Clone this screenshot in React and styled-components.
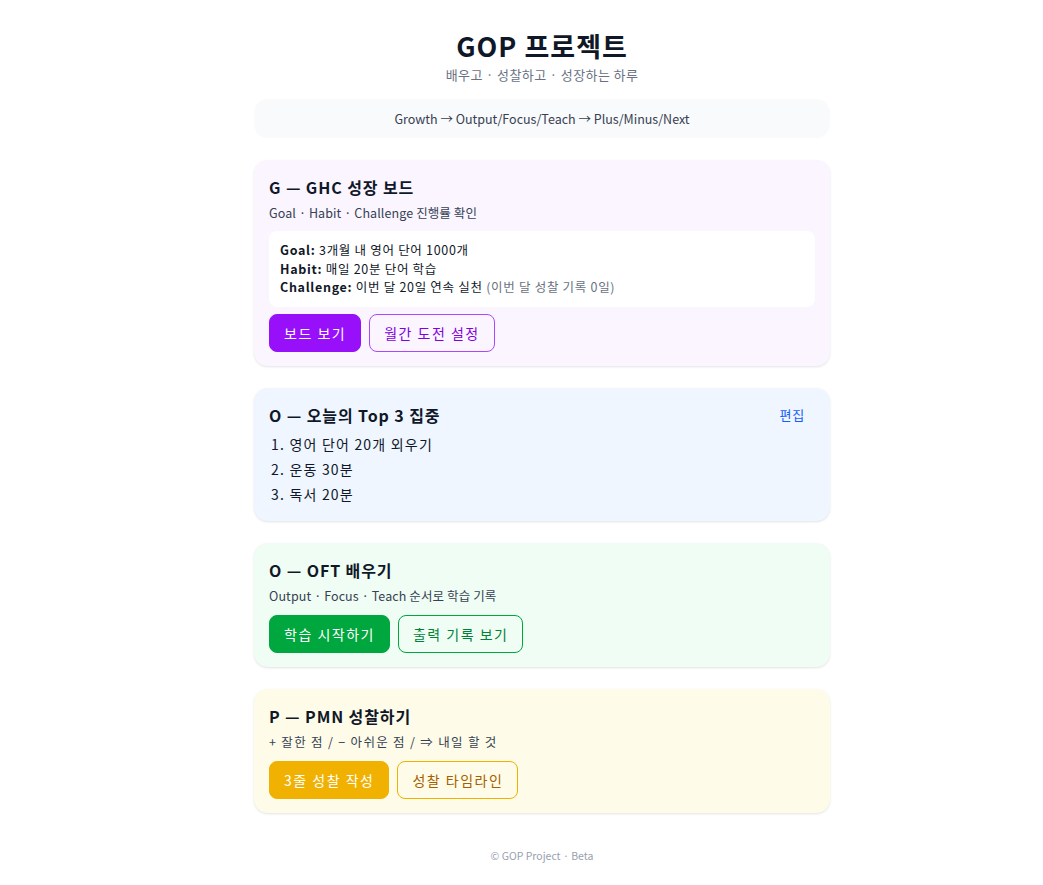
import React from "react";
import styled, { createGlobalStyle } from "styled-components";

const GlobalStyle = createGlobalStyle`
  body {
    margin: 0;
    background: #ffffff;
    font-family: "Noto Sans CJK KR", "Noto Sans", sans-serif;
    color: #101828;
  }
`;

const tones = {
  purple: { bg: "#faf5ff", solid: "#9810fa", text: "#8200db", border: "#ad46ff" },
  blue: { bg: "#eff6ff", solid: "#155dfc", text: "#155dfc", border: "#155dfc" },
  green: { bg: "#f0fdf4", solid: "#00a63e", text: "#008236", border: "#00a63e" },
  yellow: { bg: "#fefce8", solid: "#f0b100", text: "#a65f00", border: "#f0b100" },
};

const Page = styled.div`
  padding: 28px 0 0 41px;
`;

const Main = styled.main`
  width: 576px;
  margin: 0 auto;
  display: flex;
  flex-direction: column;
`;

const Header = styled.header`
  text-align: center;
`;

const Title = styled.h1`
  margin: 0;
  font-size: 27px;
  line-height: 36px;
  font-weight: 700;
  letter-spacing: 1px;
  color: #101828;
`;

const Tagline = styled.p`
  margin: 2px 0 0;
  font-size: 13px;
  line-height: 18px;
  letter-spacing: 0.4px;
  color: #6a7282;
`;

const Flow = styled.div`
  margin-top: 15px;
  height: 39px;
  border-radius: 14px;
  background: #f9fafb;
  display: flex;
  align-items: center;
  justify-content: center;
  font-size: 12.5px;
  color: #364153;
`;

const Cards = styled.div`
  margin-top: 22px;
  display: flex;
  flex-direction: column;
  gap: 22px;
`;

const Card = styled.section`
  background: ${(p) => tones[p.$tone].bg};
  border-radius: 14px;
  padding: 16px 15px 14px;
  box-shadow: 0 1px 3px rgba(0, 0, 0, 0.08), 0 1px 2px rgba(0, 0, 0, 0.04);
`;

const CardHead = styled.div`
  display: flex;
  align-items: center;
  justify-content: space-between;
`;

const CardTitle = styled.h2`
  margin: 0;
  font-size: 16px;
  line-height: 22px;
  font-weight: 700;
  letter-spacing: 0.9px;
  color: #101828;
`;

const EditLink = styled.a`
  font-size: 13px;
  letter-spacing: 0.8px;
  color: #155dfc;
  margin-right: 10px;
  cursor: pointer;
`;

const CardSub = styled.p`
  margin: 6px 0 0;
  font-size: 12.5px;
  line-height: 18px;
  letter-spacing: ${(p) => p.$spacing || "0.1px"};
  color: #364153;
`;

const InfoBox = styled.div`
  margin-top: 9px;
  background: #ffffff;
  border-radius: 8px;
  padding: 10px 11px;
  font-size: 12.5px;
  line-height: 18.5px;
  letter-spacing: 0.7px;
  color: #101828;
`;

const Muted = styled.span`
  color: #6a7282;
`;

const Actions = styled.div`
  margin-top: 10px;
  display: flex;
  gap: 8px;

  ${InfoBox} + & {
    margin-top: 7px;
  }
`;

const Button = styled.button`
  height: 38px;
  padding: 0 14px;
  border-radius: 8px;
  font-family: inherit;
  font-size: 14px;
  letter-spacing: 1.5px;
  cursor: pointer;
  border: 1px solid ${(p) => (p.$outline ? tones[p.$tone].border : tones[p.$tone].solid)};
  background: ${(p) => (p.$outline ? "transparent" : tones[p.$tone].solid)};
  color: ${(p) => (p.$outline ? tones[p.$tone].text : "#ffffff")};
`;

const TopList = styled.ol`
  margin: 6px 0 0;
  padding: 0 0 0 2px;
  list-style: none;
  font-size: 14px;
  letter-spacing: 1.2px;
  color: #101828;
  li {
    line-height: 25px;
  }
`;

const Footer = styled.footer`
  margin-top: 35px;
  text-align: center;
  font-size: 10.5px;
  color: #99a1af;
`;

export default function App() {
  return (
    <Page>
      <GlobalStyle />
      <Main>
        <Header>
          <Title>GOP 프로젝트</Title>
          <Tagline>배우고 · 성찰하고 · 성장하는 하루</Tagline>
        </Header>
        <Flow>Growth → Output/Focus/Teach → Plus/Minus/Next</Flow>

        <Cards>
          <Card $tone="purple">
            <CardTitle>G — GHC 성장 보드</CardTitle>
            <CardSub>Goal · Habit · Challenge 진행률 확인</CardSub>
            <InfoBox>
              <div><b>Goal:</b> 3개월 내 영어 단어 1000개</div>
              <div><b>Habit:</b> 매일 20분 단어 학습</div>
              <div>
                <b>Challenge:</b> 이번 달 20일 연속 실천 <Muted>(이번 달 성찰 기록 0일)</Muted>
              </div>
            </InfoBox>
            <Actions>
              <Button $tone="purple">보드 보기</Button>
              <Button $tone="purple" $outline>월간 도전 설정</Button>
            </Actions>
          </Card>

          <Card $tone="blue">
            <CardHead>
              <CardTitle>O — 오늘의 Top 3 집중</CardTitle>
              <EditLink>편집</EditLink>
            </CardHead>
            <TopList>
              <li>1. 영어 단어 20개 외우기</li>
              <li>2. 운동 30분</li>
              <li>3. 독서 20분</li>
            </TopList>
          </Card>

          <Card $tone="green">
            <CardTitle>O — OFT 배우기</CardTitle>
            <CardSub>Output · Focus · Teach 순서로 학습 기록</CardSub>
            <Actions>
              <Button $tone="green">학습 시작하기</Button>
              <Button $tone="green" $outline>출력 기록 보기</Button>
            </Actions>
          </Card>

          <Card $tone="yellow">
            <CardTitle>P — PMN 성찰하기</CardTitle>
            <CardSub $spacing="1.3px">+ 잘한 점 / − 아쉬운 점 / ⇒ 내일 할 것</CardSub>
            <Actions>
              <Button $tone="yellow">3줄 성찰 작성</Button>
              <Button $tone="yellow" $outline>성찰 타임라인</Button>
            </Actions>
          </Card>
        </Cards>

        <Footer>© GOP Project · Beta</Footer>
      </Main>
    </Page>
  );
}
